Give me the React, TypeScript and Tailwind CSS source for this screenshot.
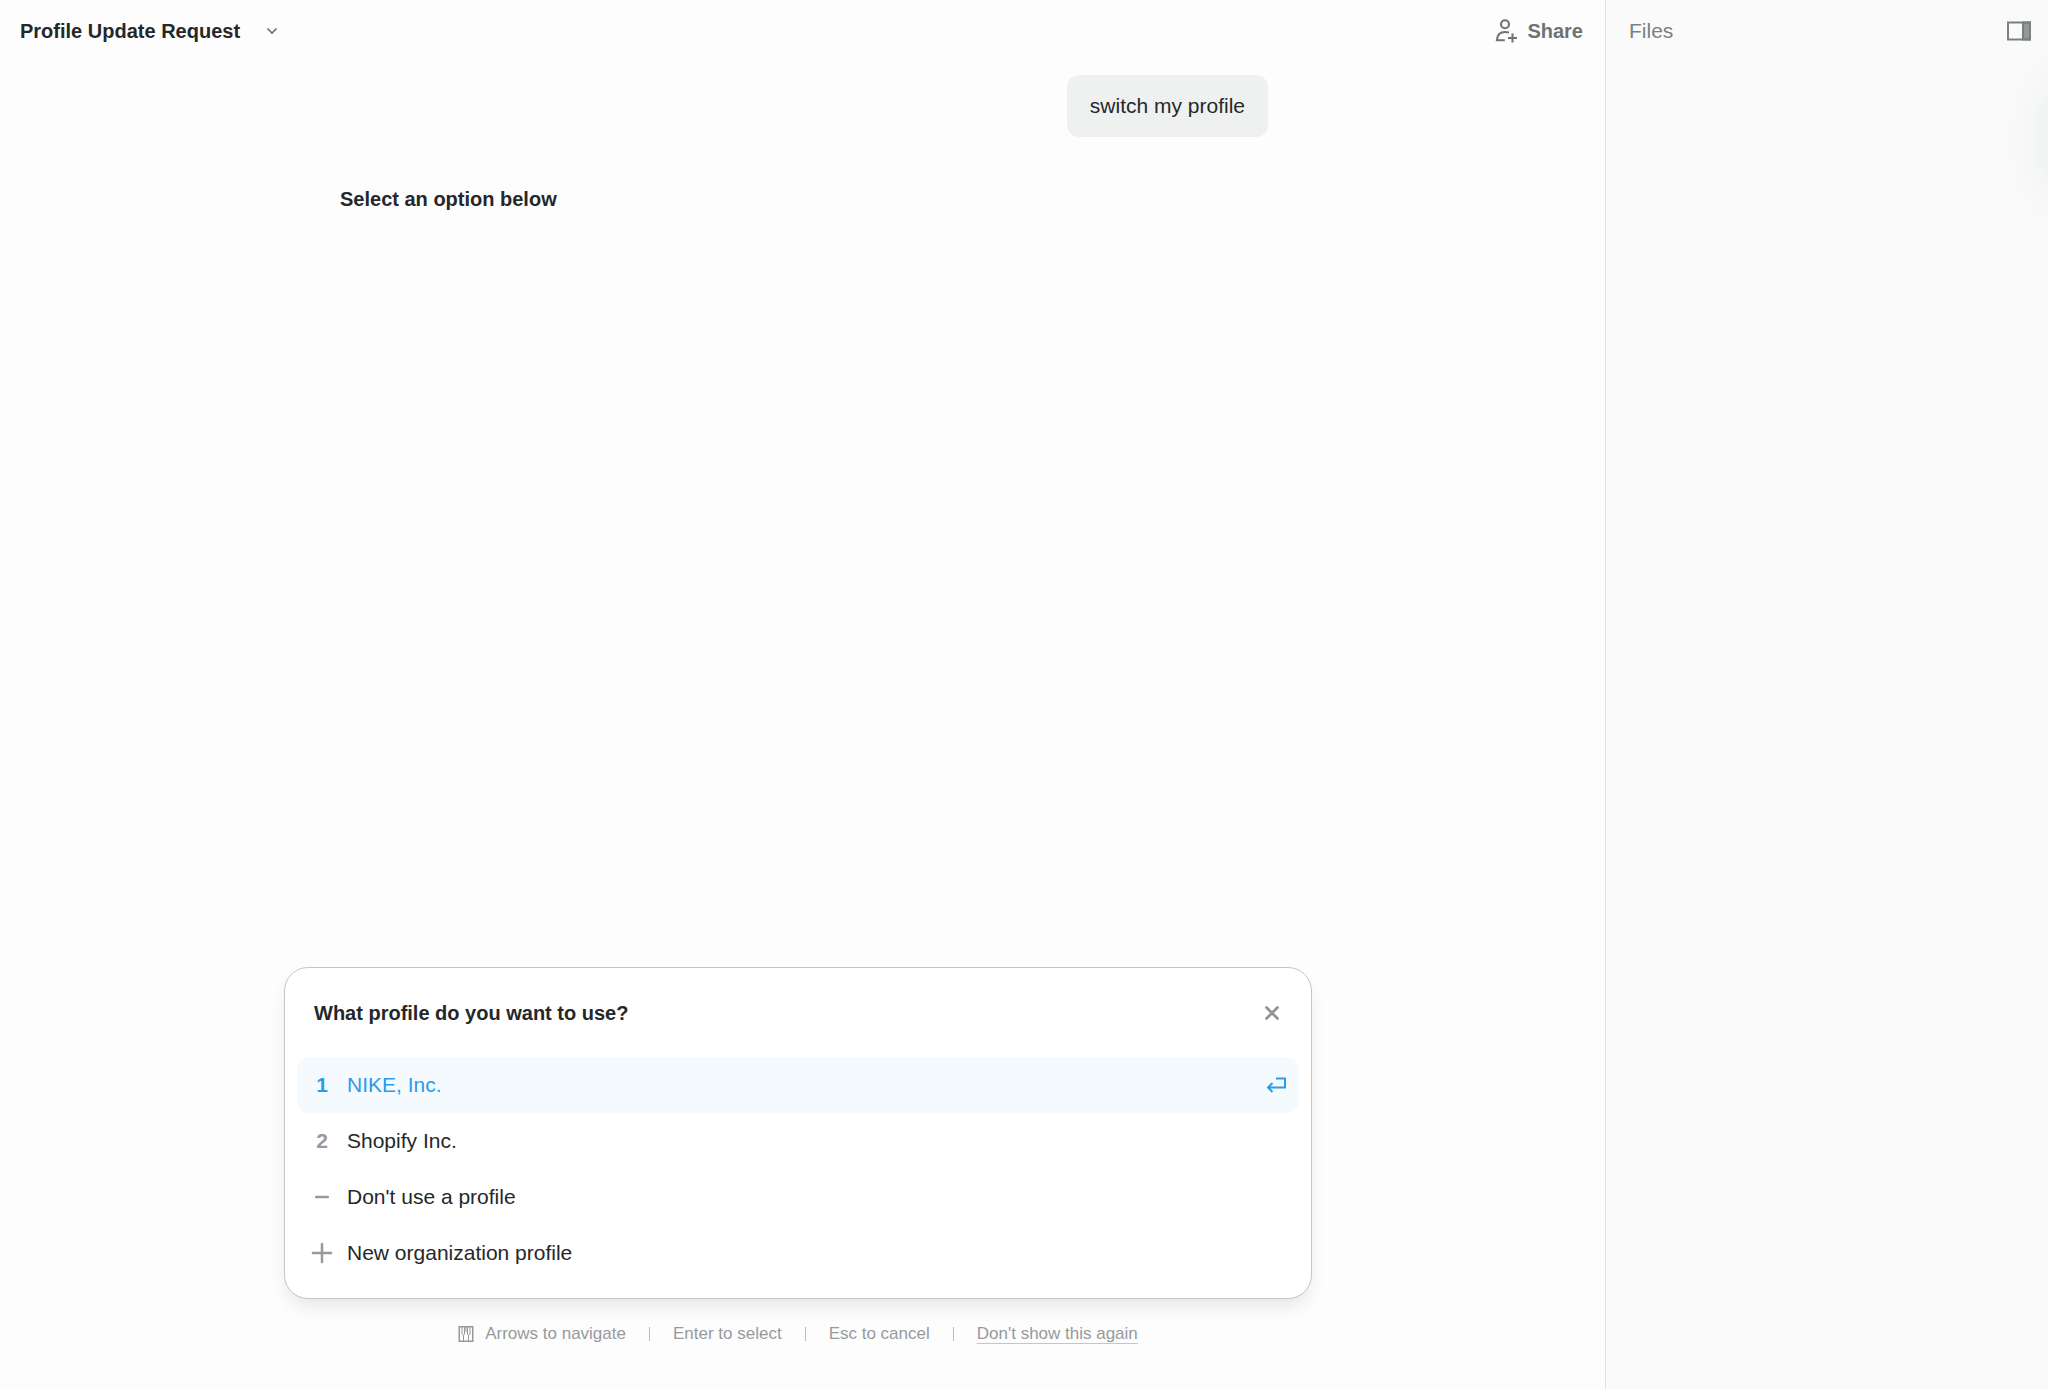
import React, { useState } from 'react';

interface ProfileOption {
  id: string;
  label: string;
  marker: React.ReactNode;
}

const MinusIcon = () => (
  <svg className="w-6 h-6" viewBox="0 0 24 24" fill="none" stroke="currentColor" strokeWidth={2.6} strokeLinecap="round">
    <path d="M6.200 12h11.600" />
  </svg>
);

const PlusIcon = () => (
  <svg className="w-6 h-6" viewBox="0 0 24 24" fill="none" stroke="currentColor" strokeWidth={2.5} strokeLinecap="round">
    <path d="M2.900 12h18.200M12 2.900v18.200" />
  </svg>
);

const ShareIcon = () => (
  <svg className="w-6 h-6" viewBox="0 0 24 24" fill="none" stroke="currentColor" strokeWidth={2.1}>
    <circle cx="11" cy="5.300" r="4" />
    <path d="M15 13.600C13.800 13.200 12.500 13 11 13C6 13 3.200 16 2.900 21.300H10.800" />
    <path d="M18.500 14.500v9M14 19h9" />
  </svg>
);

const KeysIcon = () => (
  <svg className="w-4 h-4" viewBox="0 0 16 16" fill="none" stroke="currentColor">
    <path d="M1.250 .75h13.500v14.500H1.250z" strokeWidth={1.5} />
    <path d="M4 1v7l1.500 1.500V15M6.500 1v7L5.500 9.500M9.500 1v7l1 1.500V15M12 1v7l-1.500 1.500M8 1v5" />
  </svg>
);

const Divider = () => <span className="h-3.5 w-px bg-[#b9bbbc]" />;

const options: ProfileOption[] = [
  { id: 'nike', label: 'NIKE, Inc.', marker: '1' },
  { id: 'shopify', label: 'Shopify Inc.', marker: '2' },
  { id: 'none', label: "Don't use a profile", marker: <MinusIcon /> },
  { id: 'new', label: 'New organization profile', marker: <PlusIcon /> },
];

const App: React.FC = () => {
  const [selected, setSelected] = useState<string>('nike');

  return (
    <div className="flex min-h-screen bg-[#fdfdfd] font-['Liberation_Sans',Arial,sans-serif] text-[21px] text-[#25282a]">
      {/* Conversation */}
      <main className="flex flex-1 flex-col">
        <header className="flex h-[62px] items-center justify-between pl-5 pr-[22px] text-xl">
          <button type="button" className="flex items-center gap-6 font-bold">
            Profile Update Request
            <svg className="w-4 h-4 text-[#6b6f71]" viewBox="0 0 16 16" fill="none" stroke="currentColor" strokeWidth={1.6}>
              <path d="M3.500 5.500L8 10l4.500-4.500" />
            </svg>
          </button>
          <button type="button" className="flex items-center gap-[9px] font-bold text-[#6f7375]">
            <ShareIcon />
            Share
          </button>
        </header>

        <div className="flex flex-1 flex-col pr-[9px]">
          <section className="mx-auto flex w-full max-w-[1028px] flex-1 flex-col pl-14 pr-11 pt-[13px]">
            <p className="self-end rounded-xl bg-[#eff1f1] px-[23px] py-4 leading-[30px]">switch my profile</p>
            <p className="mt-12 text-xl font-bold leading-7">Select an option below</p>
          </section>

          {/* Profile picker */}
          <section className="mx-auto w-full max-w-[1028px] rounded-3xl border border-[#c4c6c7] bg-white px-3 pb-[17px] shadow-[0_10px_18px_-4px_rgba(30,50,50,0.12)]">
            <div className="flex h-[89px] items-center justify-between px-[17px]">
              <h2 className="text-xl font-bold">What profile do you want to use?</h2>
              <button type="button" aria-label="Close" className="text-[#929596]">
                <svg className="w-5 h-5" viewBox="0 0 20 20" fill="none" stroke="currentColor" strokeWidth={2.8} strokeLinecap="round">
                  <path d="M4.500 4.500l11 11M15.500 4.500l-11 11" />
                </svg>
              </button>
            </div>
            <ul>
              {options.map((option) => {
                const active = option.id === selected;
                return (
                  <li key={option.id}>
                    <button
                      type="button"
                      onClick={() => setSelected(option.id)}
                      className={`flex h-14 w-full items-center gap-[13px] rounded-xl px-[13px] text-left ${active ? 'bg-[#f5faff] text-[#2b9bec]' : ''}`}
                    >
                      <span className={`flex w-6 justify-center font-bold ${active ? '' : 'text-[#979a9b]'}`}>{option.marker}</span>
                      <span className="flex-1">{option.label}</span>
                      {active && (
                        <svg className="w-5 h-5" viewBox="0 0 20 20" fill="none" stroke="currentColor" strokeWidth={2}>
                          <path d="M10 3.500H19V12.500H2M6.500 8L2 12.500L6.500 17" />
                        </svg>
                      )}
                    </button>
                  </li>
                );
              })}
            </ul>
          </section>

          {/* Keyboard hints */}
          <footer className="flex items-center justify-center gap-[23px] pb-11 pt-6 text-[17px] leading-[22px] text-[#979a9b]">
            <span className="flex items-center gap-[11px]">
              <KeysIcon />
              Arrows to navigate
            </span>
            <Divider />
            <span>Enter to select</span>
            <Divider />
            <span>Esc to cancel</span>
            <Divider />
            <a href="#" className="underline decoration-[#c4c6c7] decoration-1 underline-offset-4">Don't show this again</a>
          </footer>
        </div>
      </main>

      {/* Files */}
      <aside className="relative w-[443px] overflow-hidden border-l border-[#dfe1e1] bg-[#fafafa]">
        <div className="flex h-[62px] items-center justify-between pl-[23px] pr-[17px] text-[#7b7f80]">
          <h2>Files</h2>
          <button type="button" aria-label="Toggle files panel">
            <svg className="w-6 h-5" viewBox="0 0 24 20" fill="none" stroke="currentColor" strokeWidth={2}>
              <path d="M1 1.500h22v17H1z" />
              <path d="M16 1.500h7v17h-7z" fill="currentColor" fillOpacity={0.8} />
            </svg>
          </button>
        </div>
        <div className="absolute -right-12 top-[90px] h-24 w-10 rounded-xl shadow-[0_0_52px_4px_rgba(30,60,60,0.1)]" />
      </aside>
    </div>
  );
};

export default App;
